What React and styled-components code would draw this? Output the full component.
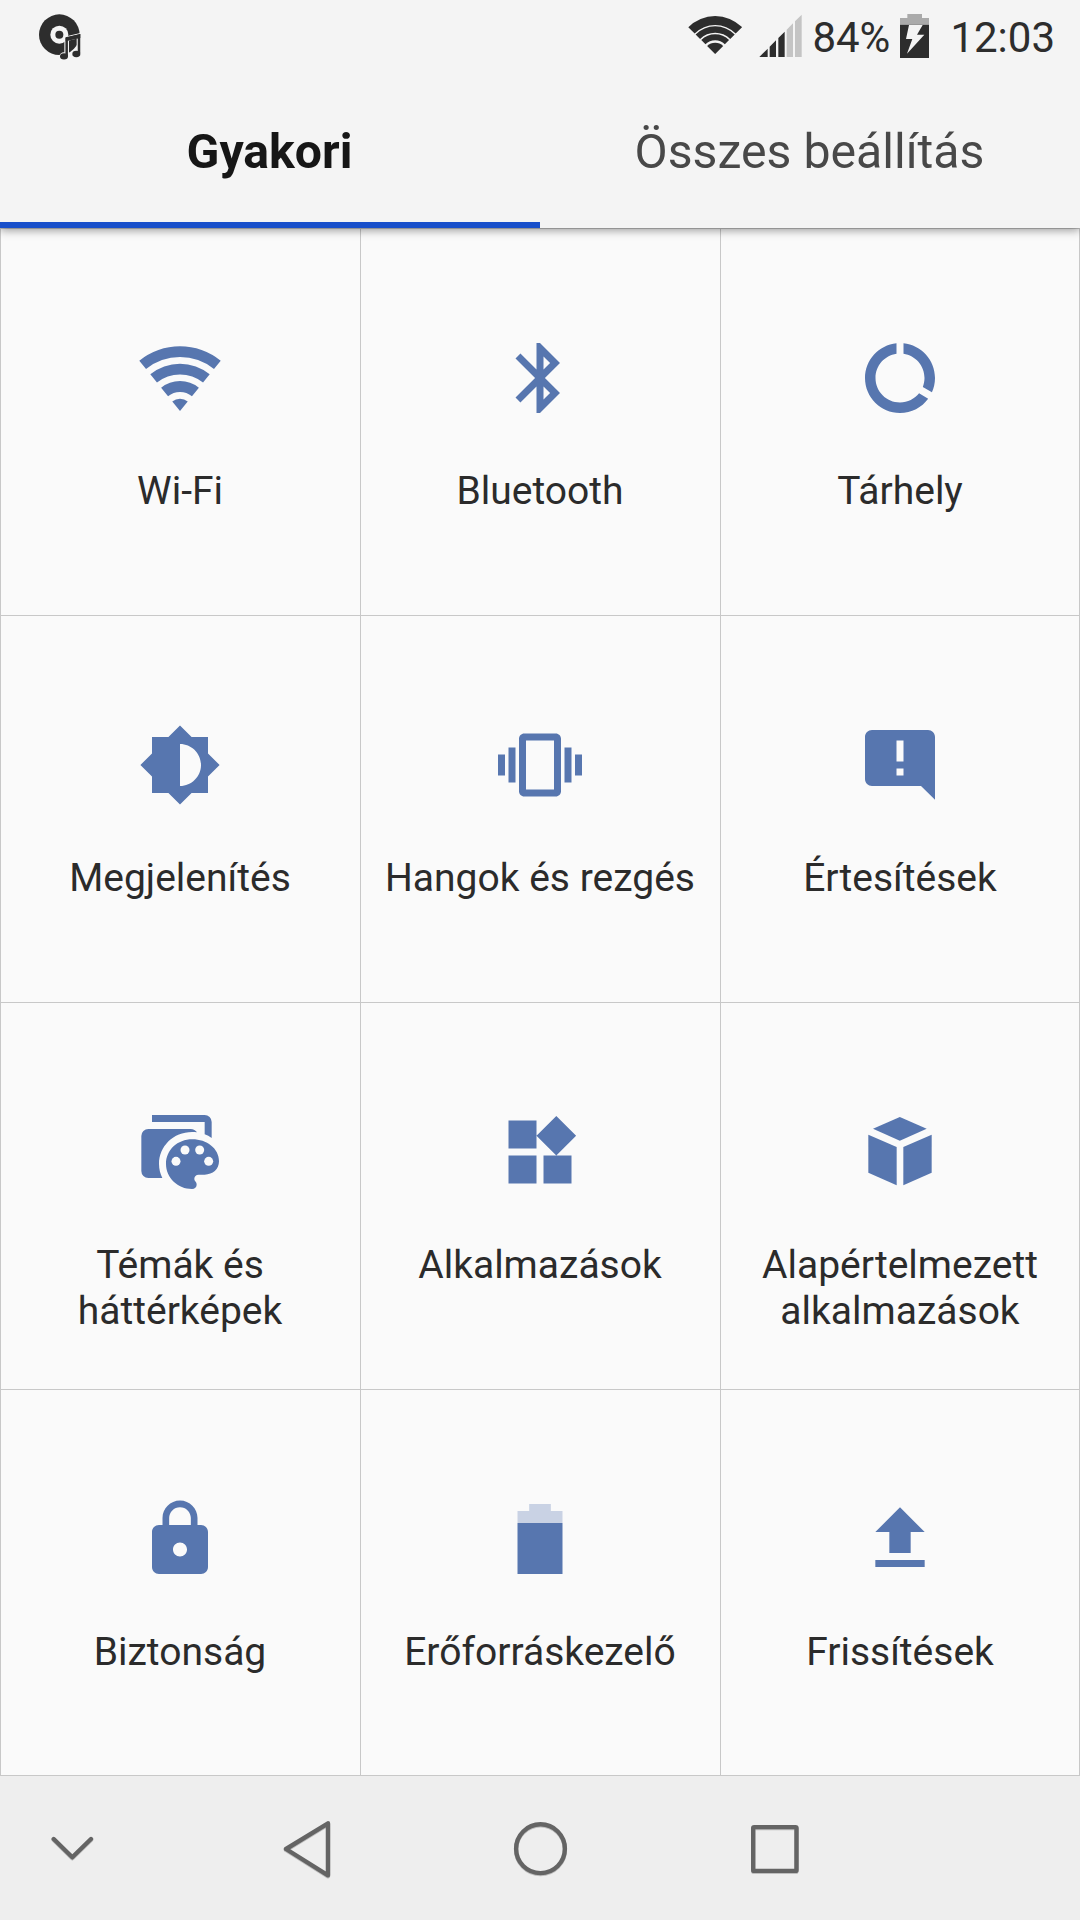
import React from 'react';
import styled, { createGlobalStyle } from 'styled-components';

const blue = '#5776af';
const dark = '#2d2d2d';

const GlobalStyle = createGlobalStyle`
  body {
    margin: 0;
    background: #eee;
    font-family: Roboto, "Noto Sans", sans-serif;
  }
`;

const Screen = styled.div`
  width: 1080px;
  height: 1920px;
  display: flex;
  flex-direction: column;
  overflow: hidden;
`;

const Header = styled.header`
  position: relative;
  z-index: 1;
  height: 228px;
  flex: none;
  display: flex;
  flex-direction: column;
  background: #f4f4f4;
  box-shadow: 0 2px 9px rgba(0, 0, 0, 0.42);
`;

const StatusBar = styled.div`
  height: 74px;
  padding: 0 25px 0 35px;
  display: flex;
  align-items: center;
  color: ${dark};
  font-size: 42px;
  line-height: 74px;
`;

const StatusIcon = styled.svg`
  flex: none;
  width: ${props => props.$w}px;
  height: 60px;
  margin-left: ${props => props.$gap || 0}px;
`;

const Spacer = styled.div`
  flex: 1;
`;

const Percent = styled.span`
  width: 79px;
  margin-left: 10px;
  padding-top: 2px;
  white-space: nowrap;
`;

const Clock = styled.span`
  margin-left: 21px;
  padding-top: 2px;
`;

const Tabs = styled.nav`
  flex: 1;
  display: flex;
`;

const Tab = styled.div`
  flex: 1;
  box-sizing: border-box;
  padding: 50px 1px 0 0;
  border-bottom: 6px solid ${props => (props.$active ? '#184fca' : 'transparent')};
  color: ${props => (props.$active ? '#161616' : '#484848')};
  font-size: 48.2px;
  font-weight: ${props => (props.$active ? 700 : 400)};
  line-height: 56px;
  text-align: center;
`;

const Grid = styled.main`
  display: grid;
  grid-template-columns: repeat(3, 360px);
  grid-auto-rows: 387px;
  background: #fafafa;
`;

const Tile = styled.div`
  box-sizing: border-box;
  display: flex;
  flex-direction: column;
  align-items: center;
  padding: 107px 1px 0 0;
  border-left: 1px solid #c8c8c8;
  border-top: 1px solid #c8c8c8;

  &:nth-child(3n) {
    padding-right: 0;
    border-right: 1px solid #c8c8c8;
  }

  &:nth-child(n + 10) {
    border-bottom: 1px solid #c8c8c8;
  }
`;

const TileIcon = styled.svg`
  width: 84px;
  height: 84px;
  fill: ${blue};
`;

const Label = styled.div`
  margin-top: 48px;
  width: 330px;
  color: #2b2b2b;
  font-size: 39px;
  line-height: 46px;
  text-align: center;
  white-space: pre-line;
`;

const NavBar = styled.footer`
  flex: 1;
  display: flex;
  align-items: center;
  gap: 174px;
  padding-left: 43px;
  background: #eee;
`;

const NavIcon = styled.svg`
  width: 60px;
  height: 60px;
  fill: none;
  stroke: #646464;
  stroke-width: 4.4;
  stroke-linecap: round;
  stroke-linejoin: round;
  filter: drop-shadow(0 1px 0.5px rgba(0, 0, 0, 0.2));
`;

// one band of a wifi fan, r0 = 0 gives the closed wedge at the bottom
const band = (cx, cy, r0, r1, deg) => {
  const s = Math.sin((deg * Math.PI) / 180);
  const c = Math.cos((deg * Math.PI) / 180);
  return `M${cx - r1 * s} ${cy - r1 * c}A${r1} ${r1} 0 0 1 ${cx + r1 * s} ${cy - r1 * c}`
    + `L${cx + r0 * s} ${cy - r0 * c}A${r0} ${r0} 0 0 0 ${cx - r0 * s} ${cy - r0 * c}Z`;
};

const Material = ({ d }) => (
  <TileIcon viewBox="0 0 24 24">
    <path fillRule="evenodd" d={d} />
  </TileIcon>
);

const WifiIcon = () => (
  <TileIcon viewBox="0 0 84 84">
    {[[54, 64.7], [36.6, 47.2], [19, 30], [0, 12.3]].map(([r0, r1]) => (
      <path key={r1} d={band(42, 75, r0, r1, 39)} />
    ))}
  </TileIcon>
);

const ThemesIcon = () => (
  <TileIcon viewBox="54 60 252 252">
    <path d="M96 75H254a21 21 0 0 1 21 21V144Q265 137 254 133V96H96Z" />
    <path d="M85 117H212c8 0 15 4 19 10-5-1-10-1-15-1C160 126 117 169 117 222c0 16 4 30 10 42H85a21 21 0 0 1-21-21V138a21 21 0 0 1 21-21Z" />
    <path d="M217 148C172 148 138 180 138 222C138 264 174 297 216 297c8 0 14-6 14-13 0-4-1-7-3-9-3-3-4-6-4-9 0-7 5-12 13-12h18c24 0 43-16 43-40C297 175 260 148 217 148Z" />
    <g fill="#fafafa">
      <circle cx="168" cy="214" r="13.5" />
      <circle cx="195" cy="180" r="13.5" />
      <circle cx="239" cy="180" r="13.5" />
      <circle cx="266" cy="214" r="13.5" />
    </g>
  </TileIcon>
);

const CubeIcon = () => (
  <TileIcon viewBox="1134 60 252 252">
    <path d="M1259.5 81L1340 116.5 1259.5 152 1179 116.5Z" />
    <path d="M1165 134L1250 171V286L1165 248Z" />
    <path d="M1355 134L1270 171V286L1355 248Z" />
  </TileIcon>
);

const BatteryIcon = () => (
  <TileIcon viewBox="54 51 252 252">
    <path fill="#c9d2e4" d="M112.5 129V93H147.5V72H212.5V93H247.5V129Z" />
    <path d="M112.5 129H247.5V282H112.5Z" />
  </TileIcon>
);

const UpdateIcon = () => (
  <TileIcon viewBox="1134 51 252 252">
    <path d="M1260 82L1334 156H1292V219H1228V156H1186ZM1186 240H1334V261H1186Z" />
  </TileIcon>
);

const tiles = [
  { label: 'Wi-Fi', icon: <WifiIcon /> },
  {
    label: 'Bluetooth',
    icon: <Material d="M17.71 7.71L12 2h-1v7.59L6.41 5 5 6.41 10.59 12 5 17.59 6.41 19 11 14.41V22h1l5.71-5.71-4.3-4.29 4.3-4.29zM13 5.83l1.88 1.88L13 9.59V5.83zm1.88 10.46L13 18.17v-3.76l1.88 1.88z" />,
  },
  {
    label: 'Tárhely',
    icon: <Material d="M13 2.05v3.03c3.39.49 6 3.39 6 6.92 0 .9-.18 1.75-.48 2.54l2.6 1.53c.56-1.24.88-2.62.88-4.07 0-5.18-3.95-9.45-9-9.95zM12 19c-3.87 0-7-3.13-7-7 0-3.53 2.61-6.43 6-6.92V2.05c-5.06.5-9 4.76-9 9.95 0 5.52 4.47 10 9.99 10 3.31 0 6.24-1.61 8.06-4.09l-2.6-1.53C16.17 17.98 14.21 19 12 19z" />,
  },
  {
    label: 'Megjelenítés',
    icon: <Material d="M20 15.31L23.31 12 20 8.69V4h-4.69L12 .69 8.69 4H4v4.69L.69 12 4 15.31V20h4.69L12 23.31 15.31 20H20v-4.69zM12 18V6c3.31 0 6 2.69 6 6s-2.69 6-6 6z" />,
  },
  {
    label: 'Hangok és rezgés',
    icon: <Material d="M0 15h2V9H0v6zm3 2h2V7H3v10zm19-8v6h2V9h-2zm-3 8h2V7h-2v10zM16.5 3h-9C6.67 3 6 3.67 6 4.5v15c0 .83.67 1.5 1.5 1.5h9c.83 0 1.5-.67 1.5-1.5v-15c0-.83-.67-1.5-1.5-1.5zM16 19H8V5h8v14z" />,
  },
  {
    label: 'Értesítések',
    icon: <Material d="M4 2h16c1.1 0 2 .9 2 2v17.9L18 18H4c-1.1 0-2-.9-2-2V4c0-1.1.9-2 2-2zM11 5v6h2V5zM11 13v2h2v-2z" />,
  },
  { label: 'Témák és\nháttérképek', icon: <ThemesIcon /> },
  {
    label: 'Alkalmazások',
    icon: <Material d="M13 13v8h8v-8h-8zM3 21h8v-8H3v8zM3 3v8h8V3H3zm13.66-1.31L11 7.34 16.66 13l5.66-5.66-5.66-5.65z" />,
  },
  { label: 'Alapértelmezett\nalkalmazások', icon: <CubeIcon /> },
  {
    label: 'Biztonság',
    icon: <Material d="M18 8h-1V6c0-2.76-2.24-5-5-5S7 3.24 7 6v2H6c-1.1 0-2 .9-2 2v10c0 1.1.9 2 2 2h12c1.1 0 2-.9 2-2V10c0-1.1-.9-2-2-2zm-6 9c-1.1 0-2-.9-2-2s.9-2 2-2 2 .9 2 2-.9 2-2 2zm3.1-9H8.9V6c0-1.71 1.39-3.1 3.1-3.1 1.71 0 3.1 1.39 3.1 3.1v2z" />,
  },
  { label: 'Erőforráskezelő', icon: <BatteryIcon /> },
  { label: 'Frissítések', icon: <UpdateIcon /> },
];

const note = 'M200 168V116L237 107V160';

// the status icons share a 180 unit height that spans y 7px to 67px
const Status = () => (
  <StatusBar>
    <StatusIcon $w={50} viewBox="105 21 150 180">
      <circle cx="178" cy="104" r="61" fill={dark} />
      <circle cx="178" cy="104" r="27" fill="#f4f4f4" />
      <circle cx="178" cy="104" r="12" fill={dark} />
      <g stroke="#f4f4f4" strokeWidth="6" fill="#f4f4f4">
        <path d={note} fill="none" strokeWidth="14" />
        <ellipse cx="192" cy="169" rx="11" ry="9" />
        <ellipse cx="229" cy="162" rx="11" ry="9" />
      </g>
      <g fill={dark}>
        <path d={note} fill="none" stroke={dark} strokeWidth="7.5" />
        <path d="M197 112L241 102V114L197 124Z" />
        <ellipse cx="192" cy="169" rx="12" ry="9.5" />
        <ellipse cx="229" cy="162" rx="12" ry="9.5" />
      </g>
    </StatusIcon>
    <Spacer />
    <StatusIcon $w={54} viewBox="85 21 162 180" fill={dark}>
      {[[87, 114], [64, 83], [41, 59], [0, 34]].map(([r0, r1]) => (
        <path key={r1} d={band(166.5, 162, r0, r1, 45)} />
      ))}
    </StatusIcon>
    <StatusIcon $w={43} $gap={17} viewBox="298 21 129 180">
      <path fill={dark} d="M299 171L324 146V171ZM330 171V140L349 121V171ZM356 171V114L375 95V171Z" />
      <path fill="#c4c4c4" d="M381 171V89L400 70V171ZM406 171V64L426 44V171Z" />
    </StatusIcon>
    <Percent>84%</Percent>
    <StatusIcon $w={29} $gap={9} viewBox="720 21 87 180">
      <path fill="#aaa" d="M720 74V54H742V42H786V54H807V74Z" />
      <path fill={dark} d="M720 74H807V174H720Z" />
      <path fill="#f4f4f4" d="M747 75H788L771 104H793L741 161L757 117H738Z" />
    </StatusIcon>
    <Clock>12:03</Clock>
  </StatusBar>
);

export default () => (
  <>
    <GlobalStyle />
    <Screen>
      <Header>
        <Status />
        <Tabs>
          <Tab $active>Gyakori</Tab>
          <Tab>Összes beállítás</Tab>
        </Tabs>
      </Header>
      <Grid>
        {tiles.map(({ label, icon }) => (
          <Tile key={label}>
            {icon}
            <Label>{label}</Label>
          </Tile>
        ))}
      </Grid>
      <NavBar>
        <NavIcon viewBox="0 0 60 60">
          <path d="M10.7 21L29.3 39.3 48 21" />
        </NavIcon>
        <NavIcon viewBox="0 0 60 60">
          <path d="M51 5.3L9 31 51 57.3Z" />
        </NavIcon>
        <NavIcon viewBox="0 0 60 60">
          <circle cx="29.5" cy="30.7" r="24.4" />
        </NavIcon>
        <NavIcon viewBox="0 0 60 60">
          <rect x="8.2" y="9.1" width="43.3" height="43.8" rx="1" />
        </NavIcon>
      </NavBar>
    </Screen>
  </>
);
